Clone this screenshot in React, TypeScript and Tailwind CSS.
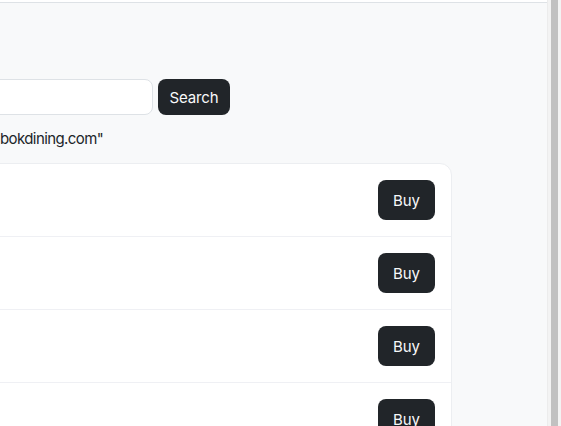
import { useState } from "react";

// Rows from the listing; only the Buy column is in view.
const rows = [1, 2, 3, 4, 5];

export default function App() {
  const [query, setQuery] = useState("");

  return (
    <div
      className="w-[561px] h-[426px] overflow-hidden flex bg-[#f8f9fa] text-[#212529]"
      style={{ fontFamily: "Inter, 'Noto Sans', sans-serif" }}
    >
      <div className="flex-1 flex flex-col min-w-0">
        <div className="h-[3px] shrink-0 bg-white border-b border-[#dee2e6]" />

        <div className="mt-[76px] flex items-center gap-[5px]">
          <input
            className="-ml-[20px] w-[173px] h-[36px] rounded-lg border border-[#dee2e6] bg-white px-3 text-[15px] outline-none"
            value={query}
            onChange={(e) => setQuery(e.target.value)}
          />
          <button className="w-[72px] h-[36px] rounded-lg bg-[#212529] text-[#f8f9fa] text-[15px] tracking-[-0.01em] leading-none">
            Search
          </button>
        </div>

        <p className="mt-[12px] text-[15px] tracking-[-0.04em] leading-[24px] whitespace-nowrap">bokdining.com"</p>

        <div className="mt-[12px] -ml-[12px] w-[464px] rounded-xl bg-white border border-[#eceef1]">
          {rows.map((r) => (
            <div key={r} className="flex justify-end px-4 py-4 border-b border-[#eff0f4]">
              <button className="w-[57px] h-[40px] rounded-lg bg-[#212529] text-[#f8f9fa] text-[15px] leading-none">
                Buy
              </button>
            </div>
          ))}
        </div>
      </div>

      {/* page scrollbar */}
      <div className="w-[14px] shrink-0 bg-[#f3f3f3] border-l border-[#ececec] pl-[3px]">
        <div className="w-[7px] h-full bg-[#c1c1c1]" />
      </div>
    </div>
  );
}
